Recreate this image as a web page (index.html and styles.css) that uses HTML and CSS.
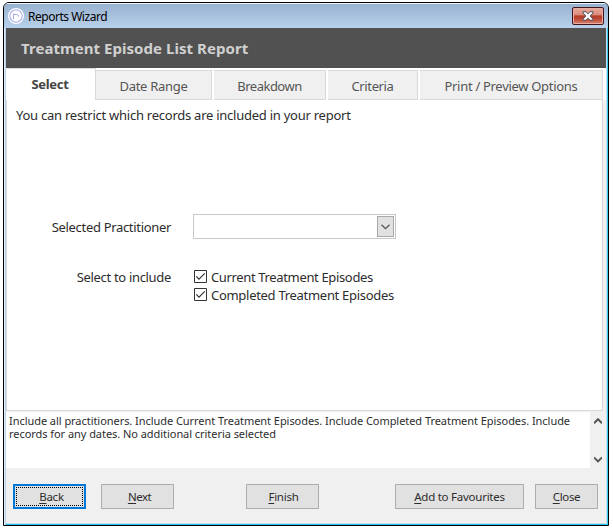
FILE: index.html
```html
<!DOCTYPE html>
<html lang="en">
<head>
<meta charset="utf-8">
<title>Reports Wizard</title>
<link rel="stylesheet" href="styles.css">
</head>
<body>
<div class="window">
  <header class="titlebar">
    <svg class="logo" width="16" height="16" viewBox="0 0 16 16" fill="none">
      <circle cx="8" cy="8" r="8" fill="#fff"/>
      <circle cx="8" cy="8" r="6.2" stroke="#a9a9f3" stroke-width="1.1"/>
      <path d="M5.5 11V5.5M5.5 6.5H8.5Q10.5 6.5 10.5 8.5" stroke="#a9a9f3" stroke-width="1"/>
    </svg>
    <span class="caption">Reports Wizard</span>
    <button class="x" aria-label="Close window">
      <svg width="12" height="10" viewBox="0 0 12 10"><path d="M1 .7H4L6 2.8 8 .7H11V2L8.2 5 11 8V9.3H8L6 7.2 4 9.3H1V8L3.8 5 1 2Z" fill="#f4f4f4" stroke="#51525e" stroke-width="1"/></svg>
    </button>
  </header>
  <h1 class="banner"><span>Treatment Episode List Report</span></h1>
  <nav class="tabs">
    <div class="tab active"><span>Select</span></div>
    <div class="tab date"><span>Date Range</span></div>
    <div class="tab breakdown"><span>Breakdown</span></div>
    <div class="tab criteria"><span>Criteria</span></div>
    <div class="tab options"><span>Print / Preview Options</span></div>
  </nav>
  <main class="panel">
    <p class="intro"><span>You can restrict which records are included in your report</span></p>
    <div class="row practitioner">
      <label><span class="l1">Selected Practitioner</span></label>
      <div class="combo"><div class="drop"><svg width="9" height="6" viewBox="0 0 9 6"><path d="M.5 .8 4.5 4.6 8.5 .8" fill="none" stroke="#555" stroke-width="1.3"/></svg></div></div>
    </div>
    <div class="row include">
      <label><span class="l2">Select to include</span></label>
      <div class="checks">
        <div class="check"><svg width="13" height="13" viewBox="0 0 13 13"><path d="M.5 .5H12.5V12.5H.5Z" fill="#fff" stroke="#333"/><path d="M2.3 6.3 5 9.2 10.8 3.3" fill="none" stroke="#333" stroke-width="1.2"/></svg><span class="c1">Current Treatment Episodes</span></div>
        <div class="check"><svg width="13" height="13" viewBox="0 0 13 13"><path d="M.5 .5H12.5V12.5H.5Z" fill="#fff" stroke="#333"/><path d="M2.3 6.3 5 9.2 10.8 3.3" fill="none" stroke="#333" stroke-width="1.2"/></svg><span class="c2">Completed Treatment Episodes</span></div>
      </div>
    </div>
  </main>
  <section class="summary">
    <p>Include all practitioners. Include Current Treatment Episodes. Include Completed Treatment Episodes. Include records for any dates. No additional criteria selected</p>
    <div class="scroll">
      <svg width="8" height="7" viewBox="0 0 8 7"><path d="M0 5.2 4 1.2 8 5.2" fill="none" stroke="#555" stroke-width="2"/></svg>
      <svg width="8" height="7" viewBox="0 0 8 7"><path d="M0 1.4 4 5.4 8 1.4" fill="none" stroke="#555" stroke-width="2"/></svg>
    </div>
  </section>
  <footer class="actions">
    <button class="btn focus"><span><u>B</u>ack</span></button>
    <button class="btn next"><span><u>N</u>ext</span></button>
    <button class="btn finish"><span><u>F</u>inish</span></button>
    <button class="btn add"><span><u>A</u>dd to Favourites</span></button>
    <button class="btn close"><span><u>C</u>lose</span></button>
  </footer>
</div>
</body>
</html>
```
FILE: styles.css
```css
* { box-sizing: border-box; }
body { margin: 0; background: #fff; color: #2d2d2d; font: 13px "Noto Sans", sans-serif; overflow: hidden; }
p, h1 { margin: 0; }
span { white-space: nowrap; }
button { padding: 0; font: inherit; color: inherit; }

.window {
  width: 606px; height: 524px; margin: 2px 0 0 3px;
  border: 1px solid #000; border-radius: 6px 6px 0 0;
  background: #f0f0f0;
  box-shadow: inset 1px 0 #e3eefa, inset 2px 0 #b9d1ea, inset -1px 0 #35d0ee, inset 0 -1px #20c4e8, inset -2px -2px #c5dcee;
  padding: 0 2px; overflow: hidden;
}
.titlebar {
  display: flex; align-items: center; height: 25px; margin: 0 -2px; padding: 0 4px;
  border-top: 1px solid #edf5fc;
  background: linear-gradient(#98b2d0, #b9d1ea);
}
.caption { margin-left: 4px; color: #000; font-size: 12px; letter-spacing: -.48px; padding-top: 1px; }
.x {
  display: flex; align-items: center; justify-content: center;
  width: 32px; height: 18px; margin-left: auto;
  border: 1px solid #43141c; border-radius: 2px;
  background: linear-gradient(#e9a99c 0, #d9887a 45%, #b73d28 48%, #bf4934 70%, #d88673 100%);
  box-shadow: inset 0 0 0 1px #e9aea3;
}
.banner { height: 40px; padding-left: 15px; background: #515151; color: #d0d0d0; font-size: 15px; line-height: 41px; letter-spacing: .05px; }
.tabs { display: flex; gap: 2px; align-items: flex-start; height: 32px; padding: 2px 3px 0 1px; background: #fff; }
.tab { flex: none; height: 30px; border: 1px solid #d9d9d9; border-left: 0; background: #f0f0f0; color: #555; text-align: center; line-height: 31px; letter-spacing: -.3px; }
.tab.active { width: 89px; height: 32px; margin: -2px -2px 0 0; padding-right: 2px; border-bottom: 0; background: #fff; color: #444; font-weight: bold; line-height: 31px; }
.date { width: 116px; }
.breakdown { width: 112px; letter-spacing: -.5px; }
.criteria { width: 90px; letter-spacing: -.38px; }
.options { width: 183px; }
.panel { height: 311px; margin-right: 3px; border: solid #d9d9d9; border-width: 0 1px 1px; background: #fff; padding: 5px 0 0 9px; }
.intro { height: 109px; line-height: 20px; letter-spacing: -.25px; }
.row { display: flex; }
.row label { width: 155px; text-align: right; letter-spacing: -.32px; }
.practitioner { height: 54px; line-height: 26px; }
.combo { display: flex; justify-content: flex-end; width: 203px; height: 25px; margin-left: 22px; padding: 1px; border: 1px solid #c8c8c8; }
.drop { display: flex; align-items: center; justify-content: center; width: 17px; height: 21px; border: 1px solid #a8a8a8; background: #e1e1e1; }
.include label { line-height: 18px; }
.checks { margin-left: 23px; }
.check { display: flex; align-items: center; gap: 4px; height: 18px; line-height: 18px; }
.check svg { margin-bottom: 1px; }
.c1 { letter-spacing: -.35px; }
.c2 { letter-spacing: -.29px; }
.summary { display: flex; height: 57px; padding-top: 1px; }
.summary p { flex: none; width: 584px; padding: 2px 12px 0 3px; background: #fff; font-size: 11px; line-height: 13px; letter-spacing: -.05px; }
.scroll { display: flex; flex-direction: column; justify-content: space-between; padding: 6px 0 5px 4px; }
.actions { display: flex; padding: 16px 0 0 7px; }
.btn { flex: none; width: 73px; height: 25px; border: 1px solid #adadad; background: #e1e1e1; font-size: 11.5px; line-height: 22px; letter-spacing: -.25px; }
.btn u { text-underline-offset: 2px; }
.focus { padding-left: 4px; border: 2px solid #0078d7; outline: 1px dotted #000; outline-offset: -4px; line-height: 20px; }
.next { margin-left: 15px; padding-left: 4px; letter-spacing: -.5px; }
.finish { margin-left: 72px; padding-left: 2px; }
.add { width: 129px; margin-left: 76px; }
.close { width: 63px; margin-left: 11px; letter-spacing: -.35px; }
```
